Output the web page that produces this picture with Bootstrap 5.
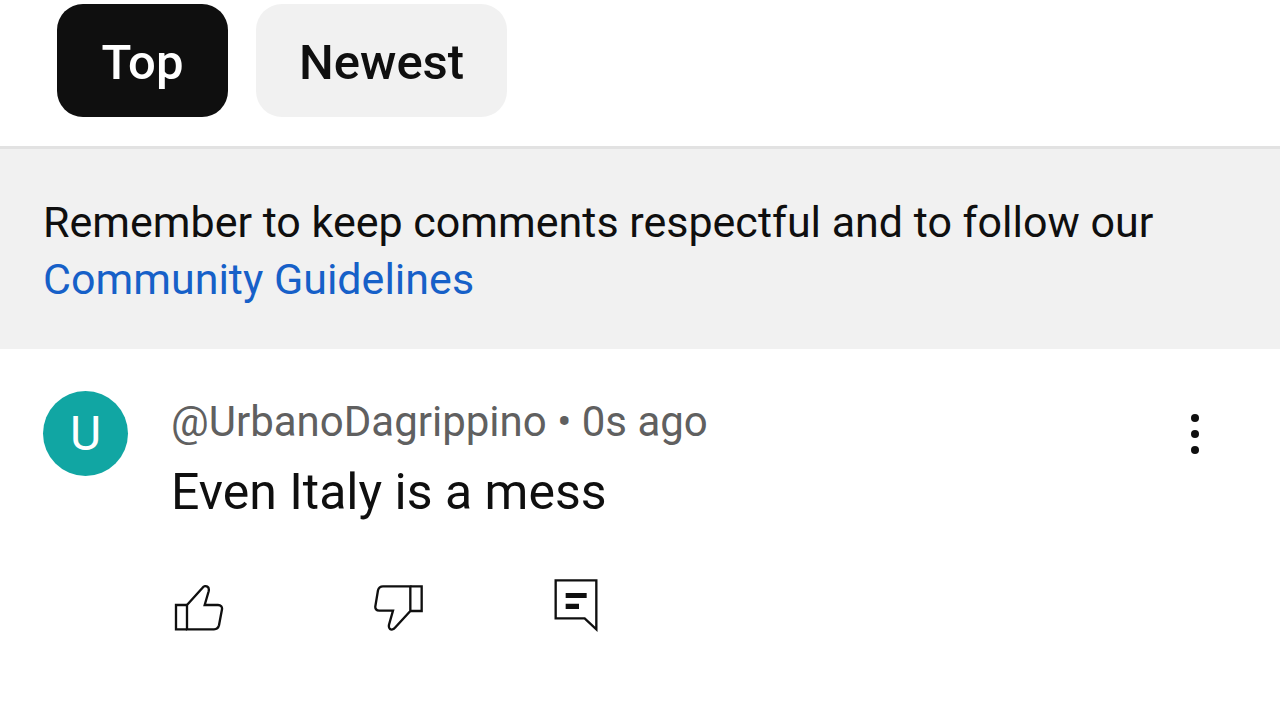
<!DOCTYPE html>
<html lang="en">
<head>
<meta charset="utf-8">
<meta name="viewport" content="width=device-width, initial-scale=1">
<title>Comments</title>
<link href="https://cdn.jsdelivr.net/npm/bootstrap@5.3.0/dist/css/bootstrap.min.css" rel="stylesheet">
<style>
body{font-family:Roboto,sans-serif;color:#0f0f0f;background:#fff}
.sort-bar{padding:4px 57px 29px;gap:28px;border-bottom:3px solid #e2e2e2}
.chip{min-width:171px;border:0;border-radius:26px;font-size:49px;font-weight:500;line-height:56px;padding:31px 43px 26px;background:#f1f1f1;color:#0f0f0f}
.chip.active{background:#0f0f0f;color:#fff}
.notice{background:#f1f1f1;padding:45px 43px 41px;font-size:43px;line-height:57px}
.notice a{color:#1660c8}
.comment{padding:42px 80px 42px 43px;gap:43px}
.avatar{width:85px;height:85px;background:#11a6a3;color:#fff;font-size:48px}
.meta{font-size:42px;line-height:62px;color:#606060}
.message{font-size:50px;line-height:64px;margin-top:7px}
.icon-btn{border:0;background:none;padding:0;color:#0f0f0f}
.icon-btn svg{display:block}
.menu-btn{height:85px}
.actions{display:grid;grid-template-columns:200px 180px auto;align-items:end;justify-content:start;justify-items:start;padding-left:3px;margin-top:55px}
.outline{fill:none;stroke:currentColor;stroke-width:7}
</style>
</head>
<body>
<div class="sort-bar d-flex" role="group" aria-label="Sort comments">
<button type="button" class="chip active" aria-pressed="true">Top</button>
<button type="button" class="chip" aria-pressed="false">Newest</button>
</div>
<p class="notice mb-0">Remember to keep comments respectful and to follow our<br><a href="#" class="text-decoration-none">Community Guidelines</a></p>
<article class="comment d-flex align-items-start">
<div class="avatar rounded-circle d-flex align-items-center justify-content-center flex-shrink-0">U</div>
<div class="flex-grow-1">
<div class="meta">@UrbanoDagrippino • 0s ago</div>
<p class="message mb-0">Even Italy is a mess</p>
<div class="actions">
<button type="button" class="icon-btn" aria-label="Like">
<svg width="50" height="48" viewBox="42 44 150 144"><g class="outline"><path d="M81 104H48V177H81"/><path d="M81 104L127 53C132 46 138 47 142 49C148 52 147 58 146 63L134 104H174C183 104 187 110 186 117L177 165C175 173 170 177 162 177H81Z"/></g></svg>
</button>
<button type="button" class="icon-btn" aria-label="Dislike">
<svg width="50" height="48" viewBox="42 44 150 144"><g class="outline"><path d="M151 48H185V122H151"/><path d="M151 122L105 172C101 178 94 179 90 176C86 173 86 169 87 163L99 121H58C49 121 45 115 46 108L54 60C56 52 62 48 69 48H151Z"/></g></svg>
</button>
<button type="button" class="icon-btn" aria-label="Reply">
<svg width="44" height="54" viewBox="42 27 132 162"><path class="outline" stroke-miterlimit="10" d="M47 31H169V178L134 145H47Z"/><path fill="currentColor" d="M77 69H140V84H77ZM77 101H117V117H77Z"/></svg>
</button>
</div>
</div>
<button type="button" class="icon-btn menu-btn flex-shrink-0" aria-label="More options">
<svg width="10" height="42" viewBox="0 0 10 42" fill="currentColor"><circle cx="5" cy="5" r="4"/><circle cx="5" cy="21" r="4"/><circle cx="5" cy="37" r="4"/></svg>
</button>
</article>
<script src="https://cdn.jsdelivr.net/npm/bootstrap@5.3.0/dist/js/bootstrap.bundle.min.js"></script>
</body>
</html>
